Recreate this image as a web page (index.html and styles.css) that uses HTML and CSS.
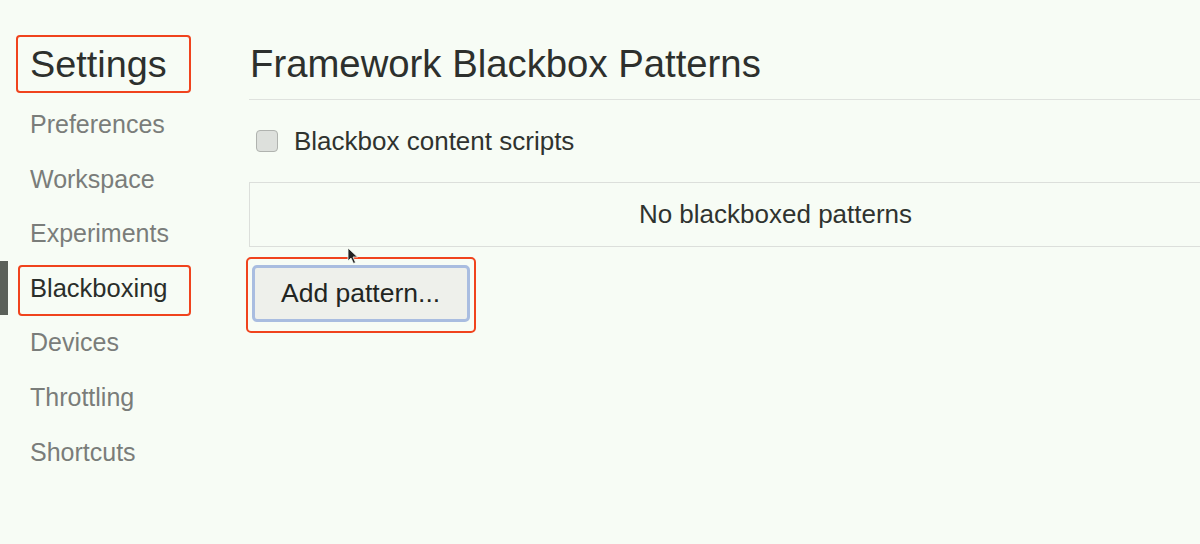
FILE: index.html
```html
<!DOCTYPE html>
<html>
<head>
<meta charset="utf-8">
<link rel="stylesheet" href="styles.css">
</head>
<body>
<div class="app">
  <aside class="sidebar">
    <div class="title">Settings</div>
    <nav class="nav">
      <div class="nav-item">Preferences</div>
      <div class="nav-item">Workspace</div>
      <div class="nav-item">Experiments</div>
      <div class="nav-item selected">Blackboxing</div>
      <div class="nav-item">Devices</div>
      <div class="nav-item">Throttling</div>
      <div class="nav-item">Shortcuts</div>
    </nav>
  </aside>
  <main class="main">
    <h1 class="heading">Framework Blackbox Patterns</h1>
    <label class="check-row"><span class="checkbox"></span><span>Blackbox content scripts</span></label>
    <div class="list">No blackboxed patterns</div>
    <div class="highlight"><button class="btn">Add pattern...</button></div>
    <svg class="cursor" width="12" height="18" viewBox="0 0 12 18"><path d="M1 1 L1 14 L4 11 L6.5 16.5 L8.5 15.5 L6 10 L10.5 10 Z" fill="#222" stroke="#f7fcf5" stroke-width="0.8"/></svg>
  </main>
</div>
</body>
</html>
```
FILE: styles.css
```css
html, body {
  margin: 0;
  padding: 0;
  background: #f7fcf5;
  overflow: hidden;
}
body {
  font-family: "Liberation Sans", Arial, sans-serif;
  color: #2f332f;
  width: 1200px;
  height: 544px;
}
.app {
  display: flex;
  width: 1200px;
  height: 544px;
  overflow: hidden;
}
.sidebar {
  width: 249px;
  flex: none;
  padding-top: 35px;
  box-sizing: border-box;
}
.title {
  margin-left: 16px;
  width: 175px;
  height: 58px;
  box-sizing: border-box;
  border: 2px solid #f0431d;
  border-radius: 4px;
  padding-left: 12px;
  font-size: 37.8px;
  line-height: 54px;
  color: #2d302d;
}
.nav {
  margin-top: 4px;
  display: flex;
  flex-direction: column;
}
.nav-item {
  position: relative;
  height: 54.6px;
  line-height: 54.6px;
  padding-left: 30px;
  font-size: 25px;
  color: #7a7d7a;
}
.nav-item.selected {
  color: #2a2e2a;
  font-size: 25.5px;
}
.nav-item.selected::before {
  content: "";
  position: absolute;
  left: 0;
  top: 0;
  width: 8px;
  height: 54px;
  background: #5b615a;
}
.nav-item.selected::after {
  content: "";
  position: absolute;
  left: 18px;
  top: 4px;
  width: 173px;
  height: 51px;
  box-sizing: border-box;
  border: 2px solid #f0431d;
  border-radius: 4px;
}
.main {
  position: relative;
  width: 1053px;
  flex: none;
  padding-top: 42px;
}
.heading {
  margin: 0;
  font-weight: normal;
  font-size: 38.3px;
  line-height: 44px;
  padding-left: 1px;
  padding-bottom: 13px;
  border-bottom: 1px solid #dfe2de;
  color: #2d302d;
}
.check-row {
  display: flex;
  align-items: center;
  height: 30px;
  margin-top: 26px;
  font-size: 26px;
  color: #2f332f;
}
.checkbox {
  width: 22px;
  height: 22px;
  box-sizing: border-box;
  margin-left: 7px;
  margin-right: 16px;
  border: 1px solid #b0b3af;
  border-radius: 4px;
  background: #dde0dc;
}
.list {
  margin-top: 26px;
  height: 65px;
  box-sizing: border-box;
  border: 1px solid #dcdfdb;
  line-height: 63px;
  text-align: center;
  font-size: 26px;
  color: #2f332f;
}
.highlight {
  display: inline-block;
  margin-top: 10px;
  margin-left: -3px;
  padding: 6px 4px 9px 4px;
  border: 2px solid #f0431d;
  border-radius: 5px;
}
.btn {
  display: block;
  width: 218px;
  height: 57px;
  box-sizing: border-box;
  border: 3px solid #a9bde0;
  border-radius: 5px;
  background: #eef0eb;
  font-family: "Liberation Sans", Arial, sans-serif;
  font-size: 26.5px;
  color: #222522;
  padding: 0 0 0 26px;
  text-align: left;
}
.cursor {
  position: absolute;
  left: 98px;
  top: 247px;
}
```
